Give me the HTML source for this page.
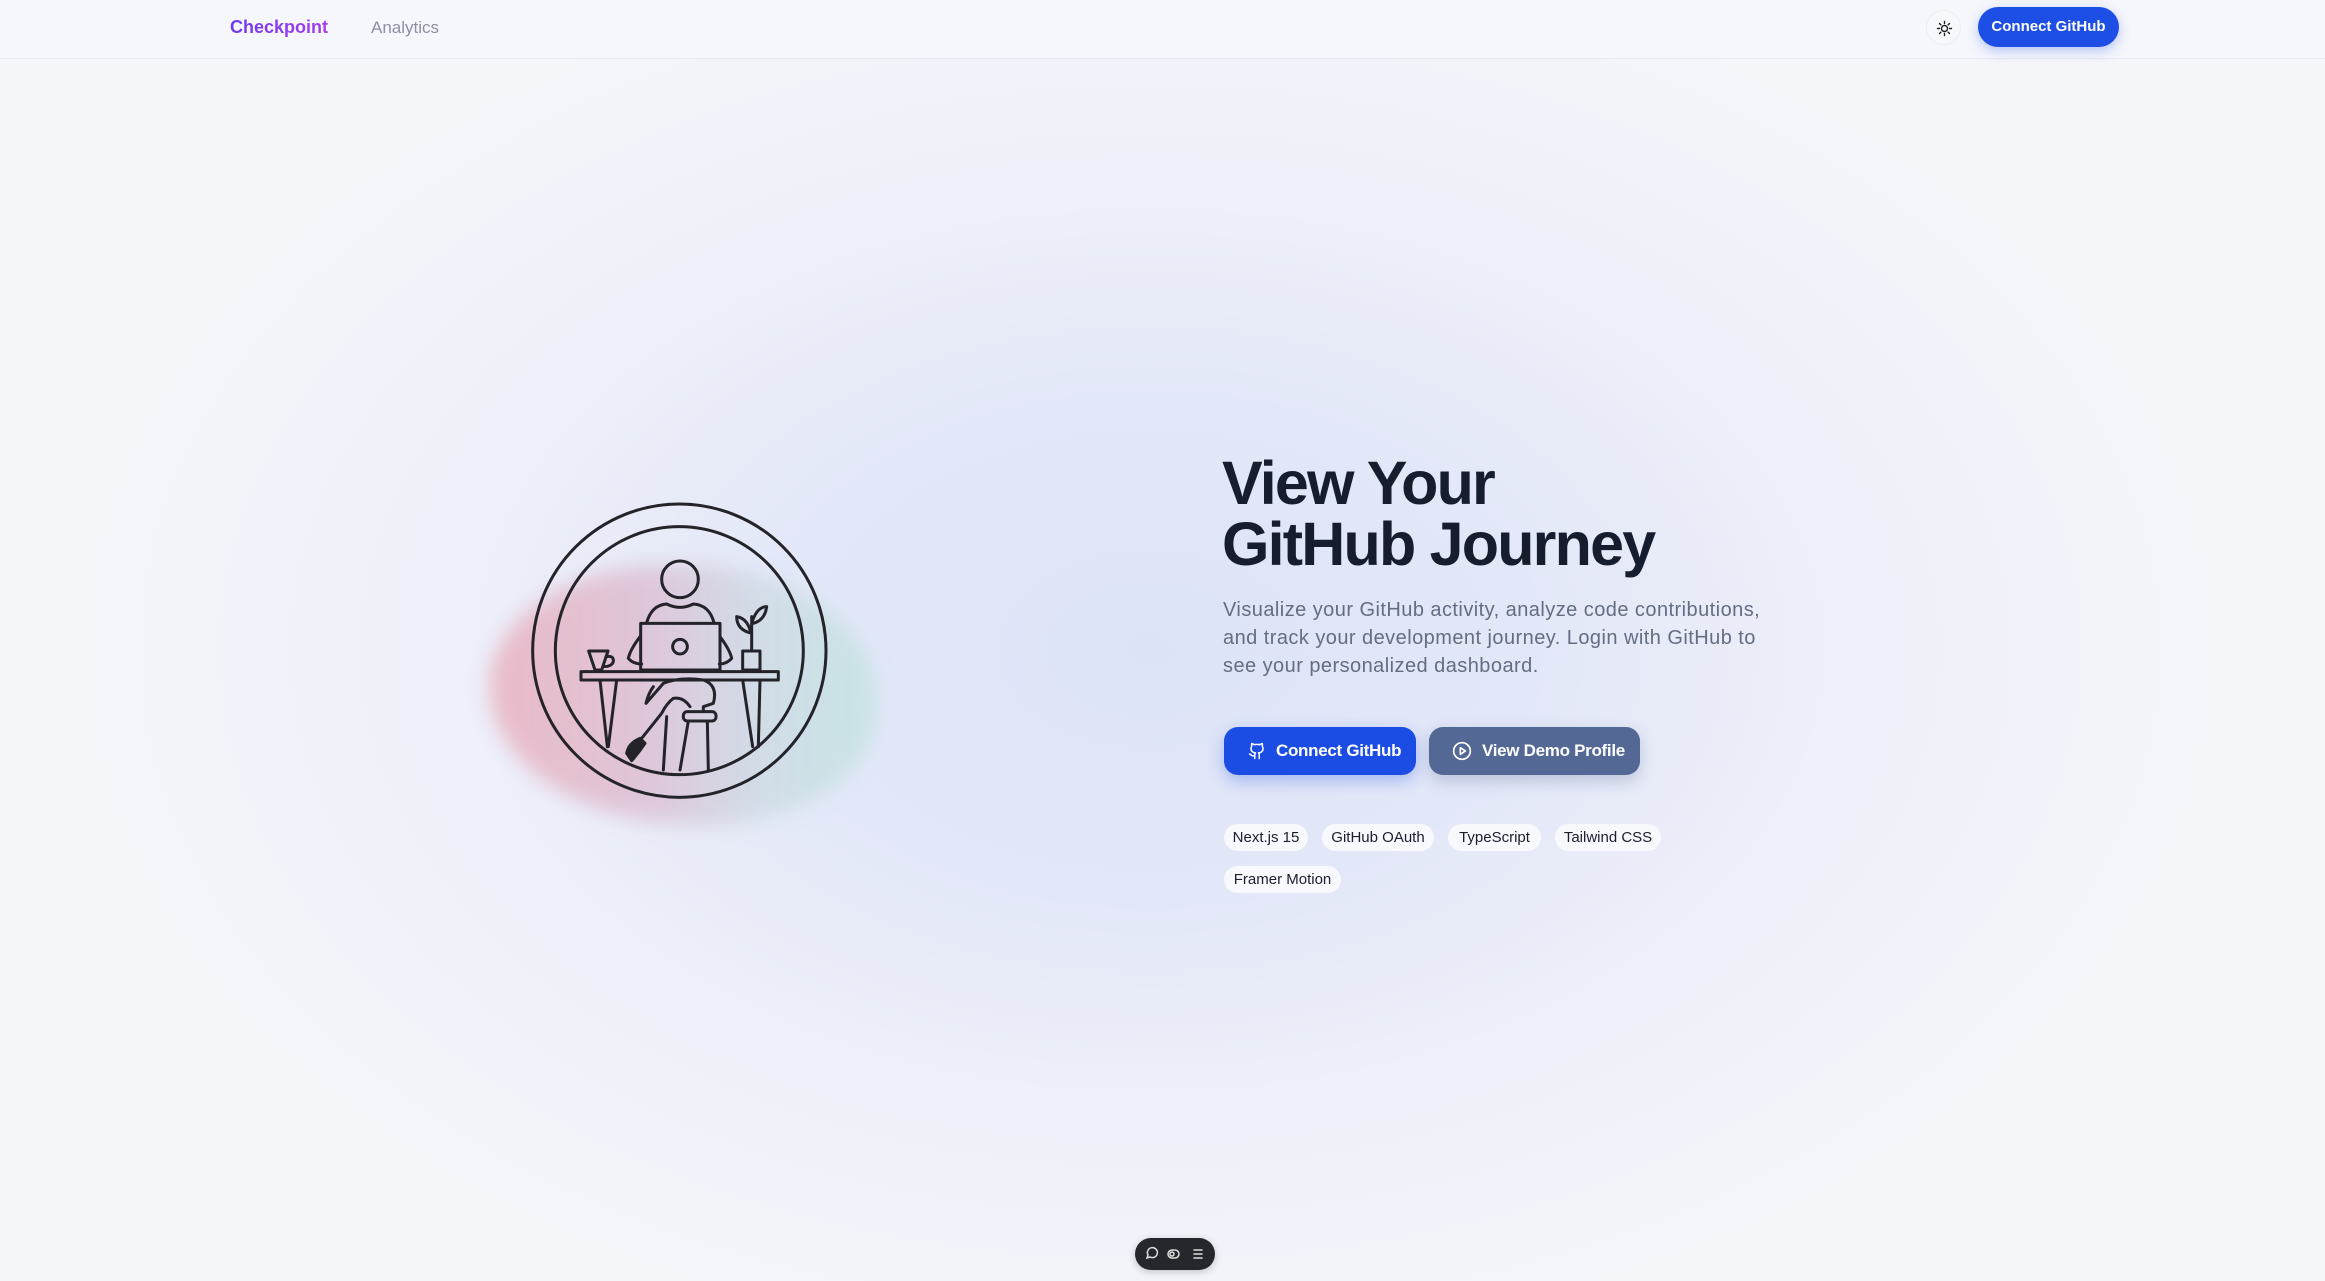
<!DOCTYPE html>
<html><head><meta charset="utf-8"><style>
*{margin:0;padding:0;box-sizing:border-box}
html,body{width:2325px;height:1281px;overflow:hidden}
body{font-family:"Liberation Sans",sans-serif;position:relative;
background:radial-gradient(ellipse 1100px 720px at 1150px 650px,#dde3f7 0%,#e3e8f8 35%,#eef0f9 65%,#f5f6fa 100%);}
.nav{position:absolute;left:0;top:0;width:2325px;height:59px;border-bottom:1px solid #e7e9f0;background:rgba(246,247,251,.85)}
.logo{position:absolute;left:230px;top:17px;font-size:18px;font-weight:bold;background:linear-gradient(90deg,#6d3bf0,#a63cf0);-webkit-background-clip:text;color:transparent}
.an{position:absolute;left:371px;top:18px;font-size:17px;color:#8b8fa3}
.sun{position:absolute;left:1926px;top:10px;width:35px;height:35px;border-radius:50%;border:1px solid #eceef3;background:#f7f8fb}
.cbtn{position:absolute;left:1978px;top:7px;width:141px;height:40px;border-radius:20px;background:#1d4fe6;color:#fff;font-size:15px;font-weight:bold;text-align:center;line-height:40px;box-shadow:0 4px 12px rgba(29,79,230,.3)}
h1{position:absolute;left:1222px;top:453px;font-size:61px;line-height:61px;font-weight:bold;color:#161d2f;letter-spacing:-1.8px;white-space:nowrap}
p.d{position:absolute;left:1223px;top:596px;width:580px;font-size:20px;line-height:28px;color:#646d82;letter-spacing:.45px}
.b{position:absolute;top:727px;height:48px;border-radius:14px;color:#fff;font-size:17px;font-weight:bold;line-height:48px;letter-spacing:-.3px;white-space:nowrap}
.b1{left:1224px;width:192px;background:#1b4de4;box-shadow:0 6px 16px rgba(27,77,228,.3);padding-left:52px}
.b2{left:1429px;width:211px;background:#536895;box-shadow:0 6px 16px rgba(60,80,130,.25);padding-left:53px}
.chip{position:absolute;height:27px;border-radius:14px;background:#f8f9fc;font-size:15px;line-height:27px;text-align:center;color:#1a1f2e;white-space:nowrap}
.tb{position:absolute;left:1135px;top:1238px;width:80px;height:32px;border-radius:16px;background:#26272c;box-shadow:0 2px 8px rgba(0,0,0,.2)}
.blob{position:absolute;left:490px;top:565px;width:385px;height:260px;border-radius:48% 52% 45% 55%;background:linear-gradient(90deg,#eab0bf 0%,#ddc0d3 40%,#cfdbe6 70%,#c3e3e0 100%);filter:blur(10px);opacity:.85}
</style></head><body>
<div class="nav">
<div class="logo">Checkpoint</div>
<div class="an">Analytics</div>
<div class="sun"><svg width="35" height="35" viewBox="0 0 35 35"><g stroke="#222" stroke-width="1.4" fill="none" stroke-linecap="round"><circle cx="17.5" cy="17.5" r="3"/><path d="M17.5 10.5v2M17.5 22.5v2M10.5 17.5h2M22.5 17.5h2M12.5 12.5l1.4 1.4M21.1 21.1l1.4 1.4M12.5 22.5l1.4-1.4M21.1 13.9l1.4-1.4"/></g></svg></div>
<div class="cbtn">Connect GitHub</div>
</div>

<div class="blob"></div>
<svg style="position:absolute;left:470px;top:490px" width="420" height="350" viewBox="0 0 1260 1050">
<g fill="none" stroke="#232329" stroke-width="9" stroke-linejoin="round" stroke-linecap="round">
<circle cx="628" cy="482" r="440"/>
<circle cx="628" cy="482" r="372"/>
<circle cx="630" cy="268" r="55"/>
<path d="M530 398 Q545 345 590 342 Q630 362 670 342 Q718 345 732 398"/>
<path d="M510 440 Q480 480 475 505 Q490 522 515 522"/>
<path d="M750 440 Q780 480 785 505 Q770 522 748 522"/>
<rect x="512" y="400" width="238" height="140"/>
<circle cx="630" cy="470" r="22"/>
<rect x="333" y="545" width="592" height="25"/>
<path d="M390 570 L412 770 M440 570 L415 770"/>
<path d="M818 570 L848 770 M870 570 L865 770"/>
<path d="M356 483 L414 483 L395 540 L375 540 Z"/>
<path d="M408 500 Q432 495 430 515 Q425 530 400 530"/>
<rect x="818" y="483" width="52" height="57"/>
<path d="M845 483 L845 380 M845 430 Q800 420 800 380 Q830 385 840 420 M845 400 Q860 350 890 350 Q885 390 850 400"/>
<path d="M550 590 Q535 610 528 640 L580 580 Q630 560 700 570 Q745 585 730 640 L700 650 L700 665"/>
<path d="M660 650 Q640 620 610 625 Q590 640 575 670 L515 745 L500 790"/>
<path d="M470 790 Q475 760 510 745 L525 760 Q505 790 485 812 Z" fill="#232329"/>
<rect x="640" y="665" width="98" height="28" rx="12"/>
<path d="M655 693 L630 840 M712 693 L715 840 M590 680 L580 840"/>
</g>
</svg>

<h1>View Your<br>GitHub Journey</h1>
<p class="d">Visualize your GitHub activity, analyze code contributions,<br>and track your development journey. Login with GitHub to<br>see your personalized dashboard.</p>

<div class="b b1"><svg style="position:absolute;left:24px;top:14px" width="18" height="20" viewBox="0 0 24 24" fill="none" stroke="#fff" stroke-width="2" stroke-linecap="round" stroke-linejoin="round"><path d="M15 22v-4a4.8 4.8 0 0 0-1-3.5c3 0 6-2 6-5.5.08-1.25-.27-2.48-1-3.5.28-1.150.28-2.35 0-3.5 0 0-1 0-3 1.5-2.64-.5-5.36-.5-8 0C6 2 5 2 5 2c-.3 1.15-.3 2.35 0 3.5A5.4 5.4 0 0 0 4 9c0 3.5 3 5.5 6 5.5-.39.49-.68 1.05-.85 1.65S8.93 17.38 9 18v4"/><path d="M9 18c-4.51 2-5-2-7-2"/></svg>Connect GitHub</div>
<div class="b b2"><svg style="position:absolute;left:23px;top:14px" width="20" height="20" viewBox="0 0 24 24" fill="none" stroke="#fff" stroke-width="2" stroke-linejoin="round"><circle cx="12" cy="12" r="10"/><path d="M10 8l6 4-6 4z"/></svg>View Demo Profile</div>

<div class="chip" style="left:1224px;top:824px;width:84px">Next.js 15</div>
<div class="chip" style="left:1322px;top:824px;width:112px">GitHub OAuth</div>
<div class="chip" style="left:1448px;top:824px;width:93px">TypeScript</div>
<div class="chip" style="left:1555px;top:824px;width:106px">Tailwind CSS</div>
<div class="chip" style="left:1224px;top:866px;width:117px">Framer Motion</div>

<div class="tb"><svg width="80" height="32" viewBox="0 0 80 32"><g fill="none" stroke="#ddd" stroke-width="1.5" stroke-linecap="round"><path d="M12 20 l1-3 a5 5 0 1 1 2 2 z"/><rect x="33" y="12" width="11" height="8" rx="4"/><circle cx="37" cy="16" r="2"/><path d="M59 12h8M59 16h8M59 20h8"/></g></svg></div>
</body></html>
